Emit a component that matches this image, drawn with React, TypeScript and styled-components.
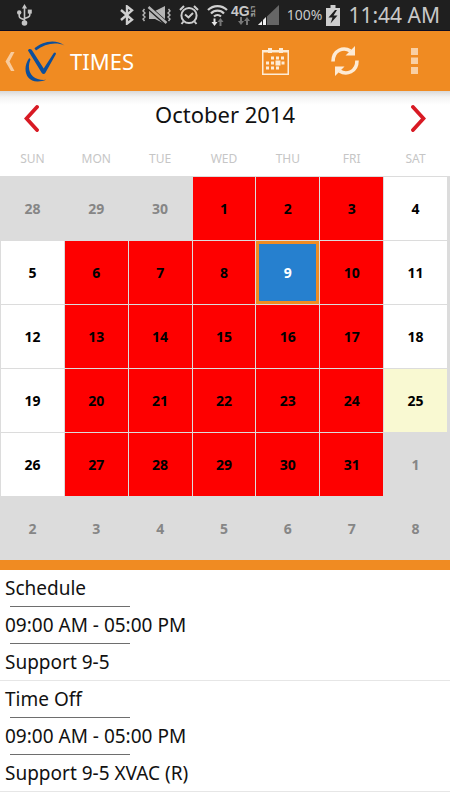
import React, { useState } from "react";
import styled, { createGlobalStyle, css } from "styled-components";

const ORANGE = "#f08b22";
const GRID_LINE = "#dcdcdc";

const GlobalStyle = createGlobalStyle`
  *, *::before, *::after { box-sizing: border-box; }
  body {
    margin: 0;
    background: #fff;
    color: #111;
    font-family: "Noto Sans", "Open Sans", sans-serif;
  }
  button { font: inherit; color: inherit; border: 0; padding: 0; background: none; cursor: pointer; }
  svg { display: block; flex: none; }
`;

const Screen = styled.div`
  display: flex;
  flex-direction: column;
  min-height: 100vh;
  overflow: hidden;
`;

/* ---------- status bar ---------- */

const StatusBar = styled.div`
  display: flex;
  align-items: center;
  justify-content: space-between;
  height: 31px;
  padding: 0 10px 0 17px;
  background: #1f1f1f;
  border-bottom: 1px solid #0b0b22;
  color: #c8c8c8;
`;

const StatusGroup = styled.div<{ $gap: number }>`
  display: flex;
  align-items: center;
  gap: ${(p) => p.$gap}px;
`;

const Network = styled.div`
  display: flex;
  flex-direction: column;
  align-items: flex-end;
  width: 24px;
  height: 20px;
`;

const NetworkName = styled.div`
  display: flex;
  align-items: center;
  height: 12px;
  font: bold 14px/12px "Liberation Sans", sans-serif;
`;

const NetworkSuffix = styled.span`
  writing-mode: vertical-rl;
  font: bold 6px/5px "Liberation Sans", sans-serif;
`;

const BatteryLevel = styled.span`
  font-size: 14px;
  line-height: 20px;
`;

const Clock = styled.time`
  font-size: 21px;
  line-height: 30px;
  white-space: nowrap;
`;

/* ---------- app bar ---------- */

const AppBar = styled.header`
  display: flex;
  align-items: center;
  height: 60px;
  padding: 0 24px 0 5px;
  background: ${ORANGE};
  color: #fff;
`;

const HomeButton = styled.button`
  display: flex;
  align-items: center;
  gap: 10px;
`;

const AppTitle = styled.h1`
  flex: 1;
  margin: 0 0 0 5px;
  font-size: 22px;
  line-height: 30px;
  font-weight: 400;
`;

const Actions = styled.div`
  display: flex;
  align-items: center;
`;

const ActionButton = styled.button`
  display: grid;
  place-items: center;
  width: 70px;
  height: 60px;
  color: #fdebd5;

  &:last-child { justify-items: end; width: 46px; padding-right: 8px; }
`;

/* ---------- calendar ---------- */

const CalendarHead = styled.div`
  display: flex;
  align-items: center;
  justify-content: space-between;
  height: 54px;
  padding: 0 24px;
  background: linear-gradient(#d9d9d9, #f3f3f3 6px, #fff 14px);
`;

const MonthTitle = styled.h2`
  margin: 0;
  padding-bottom: 8px;
  font-size: 22px;
  line-height: 30px;
  font-weight: 400;
`;

const columns = css`
  display: grid;
  grid-template-columns: repeat(7, 1fr);
  column-gap: 1px;
  padding: 0 3px 0 1px;
`;

const Weekdays = styled.div`
  ${columns}
  height: 31px;
  color: #c6c6c6;
  font-size: 12px;
  line-height: 28px;
  text-align: center;
`;

const Days = styled.div`
  ${columns}
  row-gap: 1px;
  grid-auto-rows: 63px;
  padding-top: 1px;
  background: ${GRID_LINE};
  border-bottom: 10px solid ${ORANGE};
`;

type Kind = "plain" | "busy" | "outside" | "today";

const dayFill: Record<Kind, string> = {
  plain: "#fff",
  busy: "#fe0000",
  outside: GRID_LINE,
  today: "#f9f9d2",
};

const Day = styled.button<{ $kind: Kind; $selected: boolean }>`
  && {
    background: ${(p) => dayFill[p.$kind]};
    color: ${(p) => (p.$kind === "outside" ? "#868686" : "#000")};
    font-size: 14px;
    font-weight: 700;
    ${(p) =>
      p.$selected &&
      css`
        border: 3px solid ${ORANGE};
        background: #2680cf;
        color: #fff;
      `}
  }
`;

/* ---------- entries ---------- */

const Entries = styled.ul`
  margin: 0;
  padding: 0;
  list-style: none;
`;

const Entry = styled.li`
  border-bottom: 1px solid #e6e6e6;
`;

const EntryLine = styled.div`
  padding-left: 5px;
  font-size: 19px;
  line-height: 36px;
`;

const Rule = styled.hr`
  width: 120px;
  height: 1px;
  margin: 0 0 0 10px;
  border: 0;
  background: #6e6e6e;
`;

/* ---------- icons ---------- */

const UsbIcon = () => (
  <svg width="15" height="22" viewBox="0 0 15 22" fill="#c4c4c4" stroke="#c4c4c4" strokeWidth="1.6">
    <path d="M7.5 2v17M2.2 9v3.2c0 1 1 1.8 2 2.2l3.3 1.4M12.8 8v3c0 1-.8 1.8-1.8 2.2l-3.5 1.4" fill="none" />
    <path d="M7.5 0l2.6 4.6H4.9z" stroke="none" />
    <circle cx="7.5" cy="19" r="2.8" stroke="none" />
    <circle cx="2.2" cy="8.4" r="2.2" stroke="none" />
    <path d="M10.8 5.6h4v4h-4z" stroke="none" />
  </svg>
);

const BluetoothIcon = () => (
  <svg width="14" height="20" viewBox="0 0 14 20" fill="none" stroke="#cfcfcf" strokeWidth="2.4">
    <path d="M1 5l11 9.6-5 4V1.4l5 4L1 15" />
  </svg>
);

const MuteIcon = () => (
  <svg width="29" height="18" viewBox="0 0 29 18" fill="none" stroke="#b5b5b5">
    <path d="M7 5h6l10-5v18l-10-5H7z" fill="#b5b5b5" stroke="none" />
    <path d="M5 0l20 18" stroke="#1f1f1f" strokeWidth="4.500" />
    <path d="M6.500 1l18 16" strokeWidth="2.400" />
    <path d="M2.500 3l-1.500 2 2 2-2 2 2 2-2 2 1.500 2M26.500 3l1.500 2-2 2 2 2-2 2 2 2-1.500 2" strokeWidth="1.400" />
  </svg>
);

const AlarmIcon = () => (
  <svg width="20" height="20" viewBox="0 0 20 20" fill="none" stroke="#cdcdcd" strokeWidth="2">
    <circle cx="10" cy="10.500" r="7.600" />
    <path d="M6 9.500l3.500 3 4.500-4.500M4.500 16.500L2.500 19M15.500 16.500l2 2.500M1 5l4-4M19 5l-4-4" />
  </svg>
);

const WifiIcon = () => (
  <svg width="21" height="22" viewBox="0 0 21 22" fill="none">
    <g stroke="#d0d0d0" strokeWidth="2.200">
      <path d="M1 6a13.500 13.500 0 0 1 19 0M4 9.500a9 9 0 0 1 13 0M7 12.500a5 5 0 0 1 7 0" />
    </g>
    <path d="M6.500 14.500h2v3.500h2l-3 4-3-4h2z" fill="#e6e6e6" />
    <path d="M12.500 22h2v-4h2l-3-4-3 4h2z" fill="#777" />
  </svg>
);

const TrafficIcon = () => (
  <svg width="17" height="8" viewBox="0 0 17 8" fill="#777">
    <path d="M2 0h2v4h2L3 8 0 4h2zM8 8h2V4h2L9 0 6 4h2z" />
  </svg>
);

const SignalIcon = () => (
  <svg width="21" height="20" viewBox="0 0 21 20">
    <path d="M0 20L21 0v20z" fill="#666" />
    <path d="M0 20l8-8v8z" fill="#f0f0f0" />
    <path d="M4.500 14v6M8.500 11v9" stroke="#1f1f1f" strokeWidth="1" />
  </svg>
);

const BatteryIcon = () => (
  <svg width="14" height="21" viewBox="0 0 14 21">
    <path d="M4.500 0h5v3H14v18H0V3h4.500z" fill="#cfcfcf" />
    <path d="M9 5l-6.500 7.500h4L4.500 18.500l7-8h-4L11 5z" fill="#1f1f1f" />
  </svg>
);

const BackIcon = () => (
  <svg width="10" height="19" viewBox="0 0 10 19" fill="#f9cb9c">
    <path d="M6 0h3.500L4.500 9.500l5 9.500H6L.5 9.500z" />
  </svg>
);

const Logo = () => (
  <svg width="40" height="41" viewBox="0 0 40 41" fill="#0c4f9c">
    <path d="M9.500 7.300C16 1.500 30-3 39.600 4.600 31 .8 20 2.500 11 9.500z" />
    <path d="M4.200 17C-3 27 .500 41 13 40.500c3 0 5.500-.5 8-1.700C8 39.800.500 31 5.500 18.500z" />
    <path d="M3 9.500c0-1.700 2.600-2.200 3.700-.7L18.700 27.500 28.800 12c.9-1.200 2.700-.3 2 1.200L20.300 32c-.8 1.400-2.600 1.300-3.500 0z" />
  </svg>
);

const CalendarIcon = () => (
  <svg width="27" height="27" viewBox="0 0 27 27" fill="#fdebd5">
    <path d="M0 2h27v25H0zM1.500 3.500v22h24v-22z" fillRule="evenodd" />
    <path d="M1 3h25v1.500H1z" />
    <path d="M6 0h4v5H6zM17 0h4v5h-4z" />
    <path d="M9 8.500h3v3H9zM14 8.500h3v3h-3zM19 8.500h3v3h-3zM4 13.500h3v3H4zM9 13.500h3v3H9zM13.500 12.500h5v5h-5zM19.500 13.500h3v3h-3zM4 18.500h3v3H4zM9 18.500h3v3H9zM14 18.500h3v3h-3z" />
  </svg>
);

const RefreshIcon = () => (
  <svg width="28" height="30" viewBox="0 0 28 30" fill="none" stroke="#fdebd5" strokeWidth="3.600">
    <path d="M2 15.500C2 4 12.500.500 19.500 5M26 14.500C26 26 15.500 29.500 8.500 25" />
    <path d="M24 0v9.500h-9.500zM4 30v-9.500h9.500z" fill="#fdebd5" stroke="none" />
  </svg>
);

const MoreIcon = () => (
  <svg width="7" height="26" viewBox="0 0 7 26" fill="#f9cfa3">
    <path d="M0 0h7v7H0zM0 9.500h7v6.500H0zM0 19h7v7H0z" />
  </svg>
);

const Arrow = ({ flip = false }: { flip?: boolean }) => (
  <svg width="15" height="27" viewBox="0 0 15 27" fill="none" stroke="#d81a24" strokeWidth="3.800" strokeLinecap="round">
    <path d={flip ? "M2 2l10.500 11.500L2 25" : "M13 2L2.500 13.500 13 25"} />
  </svg>
);

/* ---------- data ---------- */

const weekdays = ["SUN", "MON", "TUE", "WED", "THU", "FRI", "SAT"];

interface DayInfo {
  id: number;
  label: number;
  kind: Kind;
}

const days: DayInfo[] = Array.from({ length: 42 }, (_, id) => {
  const date = id - 2;
  if (date < 1) return { id, label: date + 30, kind: "outside" };
  if (date > 31) return { id, label: date - 31, kind: "outside" };
  const weekend = id % 7 === 0 || id % 7 === 6;
  return { id, label: date, kind: date === 25 ? "today" : weekend ? "plain" : "busy" };
});

const entries = [
  ["Schedule", "09:00 AM - 05:00 PM", "Support 9-5"],
  ["Time Off", "09:00 AM - 05:00 PM", "Support 9-5 XVAC (R)"],
];

export default function App() {
  const [selected, setSelected] = useState(11);

  return (
    <Screen>
      <GlobalStyle />
      <StatusBar>
        <UsbIcon />
        <StatusGroup $gap={8}>
          <BluetoothIcon />
          <MuteIcon />
          <AlarmIcon />
          <StatusGroup $gap={3}>
            <WifiIcon />
            <Network>
              <NetworkName>
                4G<NetworkSuffix>LTE</NetworkSuffix>
              </NetworkName>
              <TrafficIcon />
            </Network>
            <SignalIcon />
          </StatusGroup>
          <StatusGroup $gap={4}>
            <BatteryLevel>100%</BatteryLevel>
            <BatteryIcon />
          </StatusGroup>
          <Clock>11:44 AM</Clock>
        </StatusGroup>
      </StatusBar>

      <AppBar>
        <HomeButton aria-label="Back">
          <BackIcon />
          <Logo />
        </HomeButton>
        <AppTitle>TIMES</AppTitle>
        <Actions>
          <ActionButton aria-label="Calendar"><CalendarIcon /></ActionButton>
          <ActionButton aria-label="Refresh"><RefreshIcon /></ActionButton>
          <ActionButton aria-label="More options"><MoreIcon /></ActionButton>
        </Actions>
      </AppBar>

      <main>
        <CalendarHead>
          <button aria-label="Previous month"><Arrow /></button>
          <MonthTitle>October 2014</MonthTitle>
          <button aria-label="Next month"><Arrow flip /></button>
        </CalendarHead>
        <Weekdays>
          {weekdays.map((d) => <span key={d}>{d}</span>)}
        </Weekdays>
        <Days>
          {days.map((d) => (
            <Day
              key={d.id}
              $kind={d.kind}
              $selected={d.id === selected}
              aria-pressed={d.id === selected}
              onClick={() => setSelected(d.id)}
            >
              {d.label}
            </Day>
          ))}
        </Days>
        <Entries>
          {entries.map(([title, time, detail]) => (
            <Entry key={title}>
              <EntryLine>{title}</EntryLine>
              <Rule />
              <EntryLine>{time}</EntryLine>
              <Rule />
              <EntryLine>{detail}</EntryLine>
            </Entry>
          ))}
        </Entries>
      </main>
    </Screen>
  );
}
